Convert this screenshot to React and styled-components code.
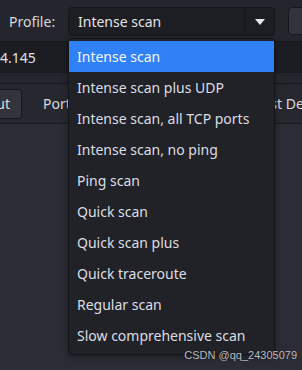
import React from "react"
import styled, { createGlobalStyle } from "styled-components"

const Global = createGlobalStyle`
  html, body {
    margin: 0;
    padding: 0;
    background: #2a2b33;
  }
  * {
    box-sizing: border-box;
  }
`

const profiles = [
  "Intense scan",
  "Intense scan plus UDP",
  "Intense scan, all TCP ports",
  "Intense scan, no ping",
  "Ping scan",
  "Quick scan",
  "Quick scan plus",
  "Quick traceroute",
  "Regular scan",
  "Slow comprehensive scan",
]

const App = () => {
  return (
    <Window>
      <Global />
      <Toolbar>
        <Label>Profile:</Label>
        <Combo>
          <ComboText>Intense scan</ComboText>
          <ComboArrow>
            <svg width="10" height="6" viewBox="0 0 10 6">
              <path d="M0 0 L10 0 L5 6 Z" fill="#e6e7eb" />
            </svg>
          </ComboArrow>
        </Combo>
        <EdgeButton />
      </Toolbar>

      <EntryRow>
        <EntryText>4.145</EntryText>
      </EntryRow>
      <Strip />

      <TabRow>
        <TabButton>ut</TabButton>
        <Tab>Ports / Hosts</Tab>
        <Tab>Topology</Tab>
        <Tab>Host Details</Tab>
      </TabRow>

      <Main />

      <Menu>
        {profiles.map((name, i) => (
          <MenuItem key={i} active={i === 0}>
            {name}
          </MenuItem>
        ))}
      </Menu>

      <Watermark>CSDN @qq_24305079</Watermark>
    </Window>
  )
}

export default App

const Window = styled.div`
  position: relative;
  width: 302px;
  height: 370px;
  overflow: hidden;
  display: flex;
  flex-direction: column;
  background: #2a2b33;
  font-family: "Noto Sans", "Open Sans", sans-serif;
  font-size: 14px;
  color: #dcdde2;
`

const Toolbar = styled.div`
  height: 41px;
  flex: none;
  display: flex;
  align-items: center;
  padding-left: 9px;
  background: #25262d;
  > * {
    flex: none;
  }
`

const Label = styled.span`
  width: 59px;
  font-size: 14px;
  color: #d6d7dc;
  padding-top: 1px;
`

const Combo = styled.div`
  width: 207px;
  height: 29px;
  margin-top: 1px;
  display: flex;
  align-items: stretch;
  background: #1d1e23;
  border: 1px solid #15161a;
  border-radius: 4px;
`

const ComboText = styled.span`
  flex: 1;
  display: flex;
  align-items: center;
  padding-left: 9px;
  color: #e2e3e7;
`

const ComboArrow = styled.span`
  width: 29px;
  display: flex;
  align-items: center;
  justify-content: center;
  border-left: 1px solid #15161a;
  padding-top: 1px;
`

const EdgeButton = styled.div`
  margin-left: 13px;
  width: 30px;
  height: 28px;
  margin-top: 1px;
  background: #32333b;
  border: 1px solid #18191d;
  border-radius: 4px;
`

const EntryRow = styled.div`
  height: 31px;
  flex: none;
  display: flex;
  align-items: center;
  background: #1c1d22;
  border-top: 1px solid #17181c;
`

const EntryText = styled.span`
  color: #e0e1e5;
  padding-top: 1px;
`

const Strip = styled.div`
  height: 12px;
  flex: none;
  background: #25262d;
  border-top: 1px solid #1a1b20;
  border-bottom: 1px solid #18191d;
`

const TabRow = styled.div`
  height: 40px;
  flex: none;
  display: flex;
  align-items: center;
  background: #27282f;
  border-bottom: 1px solid #1a1b1f;
  > * {
    flex: none;
  }
`

const TabButton = styled.div`
  width: 22px;
  height: 30px;
  padding-right: 11px;
  display: flex;
  align-items: center;
  justify-content: flex-end;
  margin-right: 21px;
  background: #33343b;
  border: 1px solid #18191d;
  border-left: none;
  border-radius: 0 4px 4px 0;
  color: #dcdde2;
`

const Tab = styled.span`
  padding-right: 32px;
  white-space: nowrap;
  color: #d8d9de;
`

const Main = styled.div`
  flex: 1;
  background: #2b2c35;
`

const Menu = styled.div`
  position: absolute;
  left: 68px;
  top: 38px;
  width: 207px;
  padding: 2px 0 3px;
  background: #212228;
  border: 1px solid #141519;
  border-radius: 4px;
  box-shadow: 0 2px 6px rgba(0, 0, 0, 0.35);
`

const MenuItem = styled.div`
  height: 31px;
  display: flex;
  align-items: center;
  padding-left: 8px;
  white-space: nowrap;
  background: ${(p) => (p.active ? "#3081f6" : "transparent")};
  color: ${(p) => (p.active ? "#f4f6fb" : "#dcdde2")};
`

const Watermark = styled.div`
  position: absolute;
  right: 5px;
  bottom: 9px;
  font-family: "Liberation Sans", Arial, sans-serif;
  font-size: 11px;
  color: #bdbec4;
  text-shadow: 0 0 1px rgba(0, 0, 0, 0.6);
`
